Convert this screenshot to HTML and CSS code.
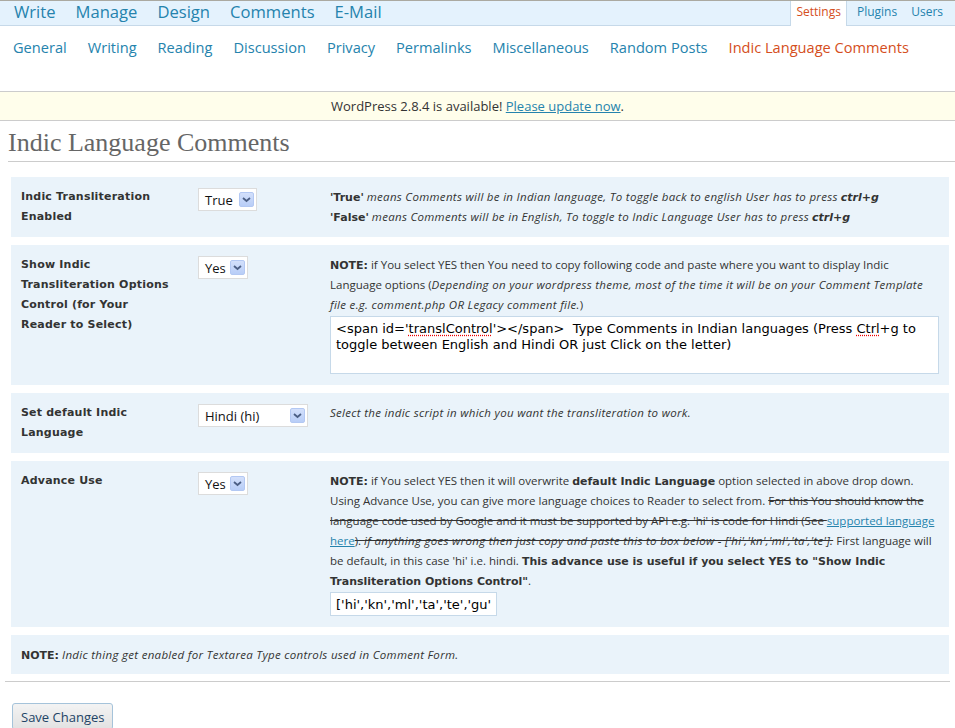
FILE: index.html
```html
<!DOCTYPE html>
<html>
<head>
<meta charset="utf-8">
<title>Indic Language Comments</title>
<link rel="stylesheet" href="styles.css">
</head>
<body>
<div class="topbar">
  <ul class="mainmenu">
    <li><a href="#">Write</a></li>
    <li><a href="#">Manage</a></li>
    <li><a href="#">Design</a></li>
    <li><a href="#">Comments</a></li>
    <li><a href="#">E-Mail</a></li>
  </ul>
  <ul class="sidemenu">
    <li class="current"><a href="#">Settings</a></li>
    <li><a href="#">Plugins</a></li>
    <li><a href="#">Users</a></li>
  </ul>
</div>
<ul class="submenu">
  <li><a href="#">General</a></li>
  <li><a href="#">Writing</a></li>
  <li><a href="#">Reading</a></li>
  <li><a href="#">Discussion</a></li>
  <li><a href="#">Privacy</a></li>
  <li><a href="#">Permalinks</a></li>
  <li><a href="#">Miscellaneous</a></li>
  <li><a href="#">Random Posts</a></li>
  <li class="current"><a href="#">Indic Language Comments</a></li>
</ul>
<div class="update-nag">WordPress 2.8.4 is available! <a href="#">Please update now</a>.</div>
<div class="wrap">
  <h2>Indic Language Comments</h2>
  <form>
    <table class="form-table">
      <colgroup><col class="c1"><col class="c2"><col></colgroup>
      <tr>
        <th>Indic Transliteration Enabled</th>
        <td><div class="select w-true"><span>True</span><span class="arrow"><svg width="13" height="13" viewBox="0 0 13 13"><path d="M3 5 L6.5 8 L10 5" fill="none" stroke="#4b5e84" stroke-width="1.8"/></svg></span></div></td>
        <td class="desc"><strong>'True'</strong> <em>means Comments will be in Indian language, To toggle back to english User has to press</em> <strong><em>ctrl+g</em></strong><br><strong>'False'</strong> <em>means Comments will be in English, To toggle to Indic Language User has to press</em> <strong><em>ctrl+g</em></strong></td>
      </tr>
      <tr>
        <th>Show Indic Transliteration Options Control (for Your Reader to Select)</th>
        <td><div class="select w-yes"><span>Yes</span><span class="arrow"><svg width="13" height="13" viewBox="0 0 13 13"><path d="M3 5 L6.5 8 L10 5" fill="none" stroke="#4b5e84" stroke-width="1.8"/></svg></span></div></td>
        <td class="desc"><strong>NOTE:</strong> if You select YES then You need to copy following code and paste where you want to display Indic Language options (<em>Depending on your wordpress theme, most of the time it will be on your Comment Template file e.g. comment.php OR Legacy comment file.</em>)
          <div class="code-box">&lt;span id='<span class="spell">translControl</span>'&gt;&lt;/span&gt;&nbsp; Type Comments in Indian languages (Press <span class="spell">Ctrl</span>+g to toggle between English and Hindi OR just Click on the letter)</div>
        </td>
      </tr>
      <tr>
        <th>Set default Indic Language</th>
        <td><div class="select w-lang"><span>Hindi (hi)</span><span class="arrow"><svg width="13" height="13" viewBox="0 0 13 13"><path d="M3 5 L6.5 8 L10 5" fill="none" stroke="#4b5e84" stroke-width="1.8"/></svg></span></div></td>
        <td class="desc"><em>Select the indic script in which you want the transliteration to work.</em></td>
      </tr>
      <tr>
        <th>Advance Use</th>
        <td><div class="select w-yes"><span>Yes</span><span class="arrow"><svg width="13" height="13" viewBox="0 0 13 13"><path d="M3 5 L6.5 8 L10 5" fill="none" stroke="#4b5e84" stroke-width="1.8"/></svg></span></div></td>
        <td class="desc"><strong>NOTE:</strong> if You select YES then it will overwrite <strong>default Indic Language</strong> option selected in above drop down. Using Advance Use, you can give more language choices to Reader to select from. <del>For this You should know the language code used by Google and it must be supported by API e.g. 'hi' is code for Hindi (See </del><a href="#">supported language here</a><del>). <em>if anything goes wrong then just copy and paste this to box below - ['hi','kn','ml','ta','te'].</em></del> First language will be default, in this case 'hi' i.e. hindi. <strong>This advance use is useful if you select YES to "Show Indic Transliteration Options Control"</strong>.
          <input class="lang-input" type="text" value="['hi','kn','ml','ta','te','gu','bn']">
        </td>
      </tr>
      <tr>
        <td colspan="3" class="note"><strong>NOTE:</strong> <em>Indic thing get enabled for Textarea Type controls used in Comment Form.</em></td>
      </tr>
    </table>
    <p class="submit"><button type="button">Save Changes</button></p>
  </form>
</div>
</body>
</html>
```
FILE: styles.css
```css
html, body {
  margin: 0;
  padding: 0;
  background: #fff;
}
body {
  font-family: "Open Sans", sans-serif;
  color: #333;
}
a {
  color: #2583ad;
  text-decoration: none;
}

/* top menu */
.topbar {
  display: flex;
  justify-content: space-between;
  height: 24px;
  background: #e4f2fd;
  border-top: 1px solid #aaa9a1;
  border-bottom: 1px solid #c6d9e9;
}
.mainmenu {
  list-style: none;
  margin: 0;
  padding: 0 0 0 14px;
  display: flex;
  gap: 20px;
  font-size: 16.6px;
  line-height: 22px;
}
.sidemenu {
  list-style: none;
  margin: 0 5px 0 0;
  padding: 0;
  display: flex;
  font-size: 12px;
  line-height: 22px;
}
.sidemenu li {
  padding: 0 7px;
}
.sidemenu li.current {
  background: #fff;
  border-left: 1px solid #c6d9e9;
  border-right: 1px solid #c6d9e9;
  height: 25px;
  padding: 0 5px;
  margin-right: 1px;
}
.sidemenu li.current + li {
  padding-left: 9px;
}
.sidemenu li.current a {
  color: #d54e21;
}

/* sub menu */
.submenu {
  list-style: none;
  margin: 0;
  padding: 11px 0 0 13px;
  height: 65px;
  box-sizing: border-box;
  display: flex;
  gap: 21px;
  font-size: 14.6px;
  line-height: 20px;
}
.submenu li.current a {
  color: #d54e21;
}

/* update notice */
.update-nag {
  background: #fffeeb;
  border-top: 1px solid #ccc;
  border-bottom: 1px solid #ccc;
  text-align: center;
  font-size: 13px;
  line-height: 16px;
  padding: 6px 0;
  color: #333;
}
.update-nag a {
  text-decoration: underline;
}

/* content */
.wrap {
  margin-left: 8px;
}
h2 {
  font-family: "Liberation Serif", serif;
  font-weight: normal;
  font-size: 26px;
  color: #666;
  margin: 0;
  padding: 9px 0 6px;
  line-height: 25px;
  border-bottom: 1px solid #ccc;
}
form {
  margin: 0;
}
.form-table {
  width: calc(100% - 9px);
  margin: 7px 6px 0 3px;
  border-collapse: separate;
  border-spacing: 0 8px;
  table-layout: fixed;
}
.form-table col.c1 {
  width: 177px;
}
.form-table col.c2 {
  width: 132px;
}
.form-table th,
.form-table td {
  background: #eaf3fa;
  padding: 10px;
  vertical-align: top;
  text-align: left;
  line-height: 20px;
  font-size: 11px;
}
.form-table th {
  font-family: "DejaVu Sans", sans-serif;
  font-weight: bold;
  letter-spacing: 0.2px;
  color: #333;
  padding-right: 13px;
}
.form-table td.desc,
.form-table td.note {
  font-size: 11.5px;
  color: #333;
}
.form-table td.note {
  padding: 10px 10px 9px;
}
.desc strong,
.note strong {
  font-family: "DejaVu Sans", sans-serif;
  font-weight: bold;
  font-size: 11px;
  line-height: 1;
}
.desc em,
.note em {
  letter-spacing: 0.3px;
}
.desc strong em,
.note strong em {
  letter-spacing: 0;
}
.desc del {
  text-decoration: line-through;
}
.desc a {
  text-decoration: underline;
}

/* fake select */
.select {
  display: flex;
  align-items: center;
  height: 23px;
  box-sizing: border-box;
  margin-top: 1px;
  border: 1px solid #dcdcdc;
  background: #fff;
  font-size: 13px;
  color: #111;
  padding-left: 6px;
}
.select .arrow {
  margin-left: auto;
  margin-right: 2px;
  width: 15px;
  height: 15px;
  box-sizing: border-box;
  border: 1px solid #b3c8f3;
  border-radius: 2px;
  background: linear-gradient(#d3e0fb, #b8cdf7);
  display: flex;
  align-items: center;
  justify-content: center;
}
.w-true { width: 59px; }
.w-yes { width: 50px; }
.w-lang { width: 110px; }

.code-box {
  margin: 1px 0 1px;
  height: 58px;
  box-sizing: border-box;
  border: 1px solid #c6d9e9;
  background: #fff;
  padding: 4px 5px;
  font-family: "DejaVu Sans", sans-serif;
  font-size: 13px;
  line-height: 16px;
  color: #000;
}
.spell {
  text-decoration: underline dotted #e00;
  text-underline-offset: 2px;
}
.lang-input {
  display: block;
  margin: 1px 0 1px;
  width: 167px;
  height: 24px;
  box-sizing: border-box;
  border: 1px solid #c6d9e9;
  padding: 0 5px;
  font-family: "DejaVu Sans", sans-serif;
  font-size: 13px;
  color: #000;
  background: #fff;
}

/* submit */
.submit {
  margin: -1px 5px 0 -3px;
  padding: 21px 0 0 7px;
  border-top: 1px solid #ccc;
}
.submit button {
  font-family: "Open Sans", sans-serif;
  font-size: 13px;
  color: #224466;
  background: linear-gradient(#f3f3f3, #e2e2e2);
  border: 1px solid #a5c3da;
  border-radius: 3px;
  padding: 3px 8px;
  height: 27px;
}
```
